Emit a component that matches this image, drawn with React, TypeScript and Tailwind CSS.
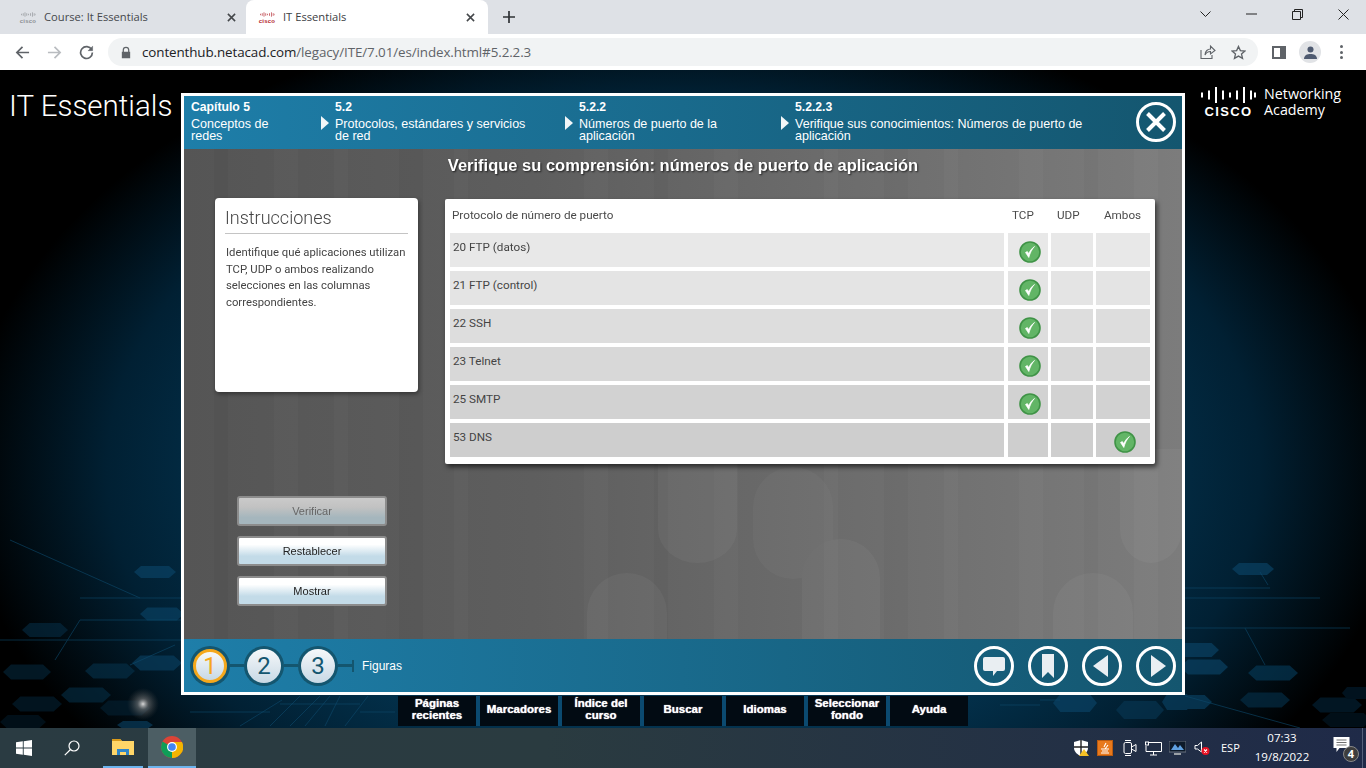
import React from "react";

const hexes: [number, number, number, number, string][] = [
  [155, 572, 42, 12, "#0b4467"], [162, 614, 44, 13, "#0a4264"], [45, 630, 46, 14, "#062a40"], [27, 672, 48, 15, "#052538"],
  [110, 671, 50, 15, "#063048"], [157, 663, 50, 15, "#0a3f60"], [86, 695, 50, 15, "#052c42"], [37, 704, 50, 15, "#041f30"],
  [125, 708, 50, 15, "#041f30"], [23, 722, 46, 14, "#031825"], [135, 725, 36, 8, "#0a3f60"],
  [1253, 569, 42, 12, "#0b4467"], [1197, 650, 44, 14, "#0b4467"], [1204, 667, 48, 15, "#0b4467"], [1273, 673, 50, 15, "#063a58"],
  [1265, 700, 50, 15, "#052f48"], [1337, 705, 50, 15, "#042236"], [1190, 702, 44, 14, "#0a4264"], [1357, 693, 30, 12, "#031d2e"],
  [1347, 720, 50, 14, "#031825"], [1075, 703, 44, 18, "#0b4467"], [1140, 710, 48, 18, "#083652"], [1177, 702, 30, 16, "#0a4264"],
];

function PageBackdrop() {
  return (
    <svg className="absolute inset-0 w-[1366px] h-[658px]" viewBox="0 70 1366 658" fill="none">
      <defs>
        <radialGradient id="glow">
          <stop offset="0%" stopColor="#d8d8d8" />
          <stop offset="35%" stopColor="#777" stopOpacity="0.6" />
          <stop offset="100%" stopColor="#444" stopOpacity="0" />
        </radialGradient>
      </defs>
      <g opacity="0.65">
        {hexes.map(([x, y, w, h, c], i) => (
          <polygon key={i} fill={c} points={`${x - w / 2},${y} ${x - w / 3},${y - h / 2} ${x + w / 3},${y - h / 2} ${x + w / 2},${y} ${x + w / 3},${y + h / 2} ${x - w / 3},${y + h / 2}`} />
        ))}
      </g>
      <g stroke="#0d4a6c" strokeWidth="1" opacity="0.6">
        <path d="M10 540 L140 598 H181 M80 598 H140 M0 640 H181 M55 660 L80 620 H181 M130 665 L175 645" />
        <path d="M1185 588 H1270 M1185 598 H1320 M1185 628 H1350 M1245 628 L1265 665 M1260 572 L1268 585" />
        <path d="M190 712 H270 M280 704 H360 M240 726 L282 700 M270 726 L300 696 M290 726 L320 696 M305 726 L330 696 M325 726 L340 696 M345 726 L368 696 M360 712 H395" />
        <path d="M1185 696 L1300 728 M1040 700 H1060 M1000 705 H1040" />
      </g>
      <circle cx="143" cy="704" r="16" fill="url(#glow)" />
    </svg>
  );
}

function ContentBackdrop() {
  const stripes = [30, 90, 150, 215, 270, 400, 470, 530, 640, 700, 760, 835, 900, 950];
  return (
    <svg className="absolute inset-0 w-[998px] h-[490px]" viewBox="0 0 998 490" fill="none">
      {stripes.map((x, i) => (
        <rect key={x} x={x} y="0" width={i % 2 ? 24 : 14} height="490" fill={i % 3 ? "#fff" : "#000"} opacity="0.025" />
      ))}
      <g fill="#fff" opacity="0.04">
        <path d="M474 300 V380 a39.500 34 0 0 0 79 0 V300 Z" />
        <path d="M569 490 V358 a40 40 0 0 1 80 0 V390 a40 40 0 0 1 -80 0 Z" opacity="0.7" />
        <path d="M618 490 V429 a39 39 0 0 1 78 0 V490 Z" />
        <path d="M403 490 V464 a40 40 0 0 1 80 0 V490 Z" />
        <path d="M869 490 V464 a40 40 0 0 1 80 0 V490 Z" />
        <path d="M936 300 V380 a31 34 0 0 0 62 0 V300 Z" />
        <path d="M150 490 V390 a26 40 0 0 1 52 0 V490 Z" opacity="0.35" />
      </g>
    </svg>
  );
}

function CiscoBars({ color, className }: { color: string; className: string }) {
  const bars: [number, number][] = [[0, 4], [5, 7], [10, 12], [15, 7], [20, 4], [25, 7], [30, 12], [35, 7], [40, 4]];
  return (
    <svg viewBox="0 0 41 12" className={className}>
      {bars.map(([x, h]) => (
        <rect key={x} x={x} y={(12 - h) / 2} width="1.800" height={h} fill={color} />
      ))}
    </svg>
  );
}

function Favicon({ color }: { color: string }) {
  return (
    <span className="flex flex-col items-center w-[16px] shrink-0">
      <CiscoBars color={color} className="w-[15px] h-[7px]" />
      <span className="text-[6px] leading-[6px] font-bold font-['Liberation_Sans',sans-serif] tracking-[0.2px]" style={{ color }}>cisco</span>
    </span>
  );
}

function TabX() {
  return (
    <svg viewBox="0 0 10 10" className="w-[9px] h-[9px] shrink-0" stroke="#44474a" strokeWidth="1.700" fill="none">
      <path d="M1 1 L9 9 M9 1 L1 9" />
    </svg>
  );
}

function Chrome() {
  return (
    <>
      <div className="h-[34px] bg-[#dee1e6] flex items-end shrink-0 font-['Open_Sans',sans-serif] text-[11.200px] text-[#3c4043]">
        <div className="w-[246px] h-[34px] flex items-center pl-[20px] pr-[10px] text-[#45484c]">
          <Favicon color="#8d9094" />
          <span className="ml-[8px] flex-1">Course: It Essentials</span>
          <TabX />
        </div>
        <div className="w-[242px] h-[34px] bg-white rounded-t-[8px] flex items-center pl-[13px] pr-[13px]">
          <Favicon color="#b3262e" />
          <span className="ml-[8px] flex-1">IT Essentials</span>
          <TabX />
        </div>
        <div className="h-[34px] w-[42px] flex items-center justify-center">
          <svg viewBox="0 0 12 12" className="w-[12px] h-[12px]" stroke="#2f3235" strokeWidth="1.700"><path d="M6 0 V12 M0 6 H12" /></svg>
        </div>
        <div className="ml-auto h-[34px] flex items-center pb-[6px]">
          <div className="w-[46px] flex justify-center">
            <svg viewBox="0 0 11 7" className="w-[11px] h-[7px]" stroke="#222" strokeWidth="1" fill="none"><path d="M0.500 0.500 L5.500 5.500 L10.500 0.500" /></svg>
          </div>
          <div className="w-[46px] flex justify-center">
            <svg viewBox="0 0 11 2" className="w-[11px] h-[2px]" stroke="#222" strokeWidth="1"><path d="M0 1 H11" /></svg>
          </div>
          <div className="w-[46px] flex justify-center">
            <svg viewBox="0 0 11 11" className="w-[11px] h-[11px]" stroke="#222" strokeWidth="1" fill="none"><path d="M0.500 2.500 H8.500 V10.500 H0.500 Z M2.500 2.500 V0.500 H10.500 V8.500 H8.500" /></svg>
          </div>
          <div className="w-[46px] flex justify-center">
            <svg viewBox="0 0 11 11" className="w-[11px] h-[11px]" stroke="#222" strokeWidth="1"><path d="M0.500 0.500 L10.500 10.500 M10.500 0.500 L0.500 10.500" /></svg>
          </div>
        </div>
      </div>
      <div className="h-[36px] bg-white flex items-center shrink-0">
        <div className="w-[108px] flex items-center pl-[15px] gap-[17px]">
          <svg viewBox="0 0 16 16" className="w-[15px] h-[15px]" fill="none" stroke="#5f6368" strokeWidth="1.800"><path d="M15 8 H2 M8 2 L2 8 L8 14" /></svg>
          <svg viewBox="0 0 16 16" className="w-[15px] h-[15px]" fill="none" stroke="#b9bcc0" strokeWidth="1.800"><path d="M1 8 H14 M8 2 L14 8 L8 14" /></svg>
          <svg viewBox="0 0 16 16" className="w-[15px] h-[15px]" fill="none" stroke="#5f6368" strokeWidth="1.800"><path d="M13.500 5 A6.300 6.300 0 1 0 14.300 8" /><path d="M14.500 1 V6 H9.500" fill="#5f6368" strokeWidth="0.500" /></svg>
        </div>
        <div className="w-[1150px] h-[28px] bg-[#f1f3f4] rounded-full flex items-center pl-[13px] pr-[10px]">
          <svg viewBox="0 0 12 14" className="w-[10px] h-[13px] shrink-0" fill="#5f6368"><path d="M2 6 V4 a4 4 0 0 1 8 0 V6 H11 V14 H1 V6 Z M3.500 6 H8.500 V4 a2.500 2.500 0 0 0 -5 0 Z" /></svg>
          <span className="ml-[11px] flex-1 text-[13.400px] text-[#5f6368] font-['Open_Sans',sans-serif] tracking-[-0.1px]">
            <span className="text-[#202124]">contenthub.netacad.com</span>/legacy/ITE/7.01/es/index.html#5.2.2.3
          </span>
          <svg viewBox="0 0 16 16" className="w-[16px] h-[16px] mr-[15px]" fill="none" stroke="#5f6368" strokeWidth="1.100"><path d="M1 6 V14.500 H12 V11" /><path d="M5 11 C5 7 8 5 10.500 5 V2 L15 6.500 L10.500 10 V7.500 C8 7.500 6 9 5 11 Z" /></svg>
          <svg viewBox="0 0 16 16" className="w-[15px] h-[15px] mr-[2px]" fill="none" stroke="#5f6368" strokeWidth="1.400"><path d="M8 1.500 L10 6 L14.800 6.400 L11.200 9.600 L12.300 14.300 L8 11.800 L3.700 14.300 L4.800 9.600 L1.200 6.400 L6 6 Z" /></svg>
        </div>
        <div className="ml-[14px] w-[14px] h-[13px] border-[2px] border-[#5f6368] border-r-[6px] shrink-0" />
        <div className="ml-[13px] w-[22px] h-[22px] rounded-full bg-[#e1e3e6] flex items-center justify-center shrink-0">
          <svg viewBox="0 0 12 12" className="w-[13px] h-[13px]" fill="#4e5a70"><circle cx="6" cy="3.300" r="2.800" /><path d="M0 12 C0 8.500 3 7.300 6 7.300 C9 7.300 12 8.500 12 12 Z" /></svg>
        </div>
        <div className="ml-[19px] flex flex-col gap-[2.500px]">
          <span className="w-[3px] h-[3px] rounded-full bg-[#5f6368]" />
          <span className="w-[3px] h-[3px] rounded-full bg-[#5f6368]" />
          <span className="w-[3px] h-[3px] rounded-full bg-[#5f6368]" />
        </div>
      </div>
    </>
  );
}

function Check() {
  return (
    <svg viewBox="0 0 22 22" className="w-[22px] h-[22px]">
      <circle cx="11" cy="11" r="10" fill="#62b566" stroke="#3f9346" strokeWidth="1.600" />
      <path d="M6.500 11.500 L9.800 16.500 C11 12 13 8 15.500 5.500 C12.800 7.500 10.800 10 9.600 12.600 L8.300 10.500 Z" fill="#fff" stroke="#fff" strokeWidth="0.700" />
    </svg>
  );
}

const rows = [
  { name: "20 FTP (datos)", bg: "bg-[#e8e8e8]", col: 0 },
  { name: "21 FTP (control)", bg: "bg-[#e4e4e4]", col: 0 },
  { name: "22 SSH", bg: "bg-[#dddddd]", col: 0 },
  { name: "23 Telnet", bg: "bg-[#d8d8d8]", col: 0 },
  { name: "25 SMTP", bg: "bg-[#d2d2d2]", col: 0 },
  { name: "53 DNS", bg: "bg-[#cecece]", col: 2 },
];

function Table() {
  return (
    <div className="ml-[27px] mt-[19px] w-[710px] h-[265px] bg-white rounded-[2px] shadow-[2px_3px_5px_rgba(0,0,0,0.6)] px-[5px] text-[11.700px] text-[#444] font-['Roboto',sans-serif]">
      <div className="h-[34px] flex items-center text-[#4a4a4a]">
        <span className="ml-[2px] w-[560px]">Protocolo de número de puerto</span>
        <span className="w-[45px]">TCP</span>
        <span className="w-[47px]">UDP</span>
        <span>Ambos</span>
      </div>
      <div className="flex flex-col gap-[4px]">
        {rows.map((r) => (
          <div key={r.name} className="flex h-[34px]">
            <div className={`w-[554px] pl-[3px] pt-[7px] leading-[14px] ${r.bg}`}>{r.name}</div>
            <div className={`ml-[4px] w-[40px] pl-[11px] pt-[8px] ${r.bg}`}>{r.col === 0 && <Check />}</div>
            <div className={`ml-[3px] w-[42px] ${r.bg}`} />
            <div className={`ml-[3px] w-[54px] pl-[18px] pt-[8px] ${r.bg}`}>{r.col === 2 && <Check />}</div>
          </div>
        ))}
      </div>
    </div>
  );
}

function Instructions() {
  return (
    <div className="w-[203px] h-[194px] bg-white rounded-[4px] px-[10px] pt-[8px] shadow-[1px_2px_4px_rgba(0,0,0,0.4)]">
      <div className="h-[28px] border-b border-[#c4c4c4] text-[18px] leading-[24px] font-light text-[#444] font-['Roboto',sans-serif]">Instrucciones</div>
      <p className="mt-[11px] ml-px text-[11.300px] leading-[16.700px] text-[#444] font-['Roboto',sans-serif]">
        Identifique qué aplicaciones utilizan TCP, UDP o ambos realizando selecciones en las columnas correspondientes.
      </p>
    </div>
  );
}

function ActionButton({ label, disabled }: { label: string; disabled?: boolean }) {
  return (
    <div
      className={`w-[150px] h-[30px] rounded-[3px] border-2 border-[#8c8c8c] flex items-center justify-center text-[11px] font-['Liberation_Sans',sans-serif] ${
        disabled
          ? "bg-[linear-gradient(#cacaca_0%,#c2c2c2_35%,#a5b6bd_75%,#a5b6bd_100%)] text-[#666]"
          : "bg-[linear-gradient(#ffffff_0%,#ffffff_25%,#c3dbe8_70%,#c3dbe8_100%)] text-[#222]"
      }`}
    >
      {label}
    </div>
  );
}

function Header() {
  const Arrow = () => (
    <svg viewBox="0 0 8 14" className="w-[8px] h-[14px] mt-[20px] shrink-0 mr-[6px]" fill="#f2f6f8"><path d="M0 0 L8 7 L0 14 Z" /></svg>
  );
  const Item = ({ n, t, w }: { n: string; t: React.ReactNode; w: string }) => (
    <div className={`${w} pt-[4px]`}>
      <div className="font-bold leading-[14px] text-[12.200px]">{n}</div>
      <div className="mt-[4px] leading-[12px]">{t}</div>
    </div>
  );
  return (
    <div className="h-[53px] bg-[linear-gradient(90deg,#1e7ea9,#14566f)] text-white text-[12.550px] flex font-['Liberation_Sans',sans-serif] pl-[7px] relative shrink-0">
      <div className="w-[130px] flex"><Item n="Capítulo 5" t={<>Conceptos de<br />redes</>} w="w-[130px]" /></div>
      <div className="w-[244px] flex"><Arrow /><Item n="5.2" t={<>Protocolos, estándares y servicios<br />de red</>} w="w-[230px]" /></div>
      <div className="w-[216px] flex"><Arrow /><Item n="5.2.2" t={<>Números de puerto de la<br />aplicación</>} w="w-[200px]" /></div>
      <div className="w-[330px] flex"><Arrow /><Item n="5.2.2.3" t={<>Verifique sus conocimientos: Números de puerto de<br />aplicación</>} w="w-[310px]" /></div>
      <div className="ml-auto mr-[6px] mt-[6px]">
        <svg viewBox="0 0 40 40" className="w-[40px] h-[40px]" fill="none" stroke="#fff">
          <circle cx="20" cy="20" r="18.500" strokeWidth="3" />
          <path d="M11.500 11.500 L28.500 28.500 M28.500 11.500 L11.500 28.500" strokeWidth="4" />
        </svg>
      </div>
    </div>
  );
}

function Step({ n, active }: { n: string; active?: boolean }) {
  return (
    <div className="w-[40px] h-[40px] rounded-full bg-[#14566f] p-[3px] shrink-0">
      <div
        className={`w-[34px] h-[34px] rounded-full flex items-center justify-center text-[24px] font-['Roboto',sans-serif] bg-[linear-gradient(#f6f8fa,#c8d9e5)] ${
          active ? "border-[3px] border-[#f5a81c] text-[#f5a81c]" : "text-[#14566f]"
        }`}
      >
        {n}
      </div>
    </div>
  );
}

function RoundIcon({ children }: { children: React.ReactNode }) {
  return (
    <svg viewBox="0 0 40 40" className="w-[40px] h-[40px]" fill="#e9eef2">
      <circle cx="20" cy="20" r="18.500" fill="none" stroke="#fff" strokeWidth="3" />
      {children}
    </svg>
  );
}

function Footer() {
  const Line = () => <div className="w-[14px] h-[3px] bg-[#14566f] shrink-0" />;
  return (
    <div className="h-[53px] bg-[linear-gradient(90deg,#1e7ea9,#14566f)] flex items-center pl-[6px] pr-[6px] gap-0 shrink-0">
      <Step n="1" active />
      <Line />
      <Step n="2" />
      <Line />
      <Step n="3" />
      <Line />
      <div className="w-[2px] h-[12px] bg-[#14566f]" />
      <span className="ml-[8px] text-[12px] text-white font-['Liberation_Sans',sans-serif]">Figuras</span>
      <div className="ml-auto flex gap-[14px]">
        <RoundIcon><path d="M11 11 H29 a2 2 0 0 1 2 2 V23 a2 2 0 0 1 -2 2 H23 L19 30 V25 H11 a2 2 0 0 1 -2 -2 V13 a2 2 0 0 1 2 -2 Z" /></RoundIcon>
        <RoundIcon><path d="M14 8 H26 V32 L20 26 L14 32 Z" /></RoundIcon>
        <RoundIcon><path d="M26 9 V31 L11 20 Z" /></RoundIcon>
        <RoundIcon><path d="M15 9 V31 L30 20 Z" /></RoundIcon>
      </div>
    </div>
  );
}

function Panel() {
  return (
    <div className="w-[1004px] h-[602px] border-[3px] border-white flex flex-col">
      <Header />
      <div className="h-[490px] relative bg-[linear-gradient(90deg,#555555,#5e5e5e_35%,#7c7c7c)] shrink-0">
        <ContentBackdrop />
        <div className="relative flex flex-col h-full">
          <h1 className="h-[31px] pt-[5px] text-center text-[16.500px] leading-[22px] font-bold text-white font-['Liberation_Sans',sans-serif] [text-shadow:1px_1px_2px_rgba(0,0,0,0.7)]">
            Verifique su comprensión: números de puerto de aplicación
          </h1>
          <div className="flex">
            <div className="ml-[31px] mt-[18px] flex flex-col">
              <Instructions />
              <div className="ml-[22px] mt-[104px] flex flex-col gap-[10px]">
                <ActionButton label="Verificar" disabled />
                <ActionButton label="Restablecer" />
                <ActionButton label="Mostrar" />
              </div>
            </div>
            <Table />
          </div>
        </div>
      </div>
      <Footer />
    </div>
  );
}

function BottomNav() {
  const items: React.ReactNode[] = [
    <>Páginas<br />recientes</>, "Marcadores", <>Índice del<br />curso</>, "Buscar", "Idiomas", <>Seleccionar<br />fondo</>, "Ayuda",
  ];
  return (
    <div className="ml-[217px] mt-px w-[570px] h-[30px] flex gap-[4px] bg-[#0b4a70]">
      {items.map((t, i) => (
        <div key={i} className="w-[78px] h-[30px] bg-[#020b13] text-white text-[11.500px] leading-[12.500px] font-bold text-center flex items-center justify-center pb-[4px] font-['Liberation_Sans',sans-serif] [text-shadow:0_0_1px_#fff]">
          <span>{t}</span>
        </div>
      ))}
    </div>
  );
}

function Logo() {
  const bars: [number, number][] = [[0, 5], [7, 9], [14, 16], [21, 9], [28, 5], [35, 9], [42, 16], [49, 9], [53, 5]];
  return (
    <div className="ml-[16px] mt-[17px] flex text-white">
      <div className="w-[55px] flex flex-col items-center">
        <svg viewBox="0 0 55 16" className="w-[55px] h-[16px]">
          {bars.map(([x, h]) => (
            <rect key={x} x={x} y={(16 - h) / 2} width="2" height={h} fill="#fff" />
          ))}
        </svg>
        <span className="mt-[1px] text-[13px] leading-[16px] font-bold tracking-[1.400px] font-['Liberation_Sans',sans-serif]">CISCO</span>
      </div>
      <div className="ml-[8px] text-[14.300px] leading-[16px] font-['Open_Sans',sans-serif] -mt-[1px]">
        Networking<br />Academy
      </div>
    </div>
  );
}

function Taskbar() {
  return (
    <div className="h-[40px] bg-[linear-gradient(90deg,#2a3b42,#2a3b40_40%,#1f2a48)] flex items-center shrink-0 text-white font-['Open_Sans',sans-serif]">
      <div className="w-[48px] flex justify-center">
        <svg viewBox="0 0 16 16" className="w-[16px] h-[16px]" fill="#fff"><path d="M0 2.300 L6.800 1.300 V7.500 H0 Z M7.700 1.200 L16 0 V7.500 H7.700 Z M0 8.400 H6.800 V14.700 L0 13.700 Z M7.700 8.400 H16 V16 L7.700 14.800 Z" /></svg>
      </div>
      <div className="w-[48px] flex justify-center">
        <svg viewBox="0 0 16 16" className="w-[16px] h-[16px]" fill="none" stroke="#fff" strokeWidth="1.200"><circle cx="10" cy="6" r="5" /><path d="M6.500 9.500 L0.800 15.200" /></svg>
      </div>
      <div className="ml-[7px] w-[40px] h-[40px] flex items-center justify-center border-b-[2px] border-[#6cb4ee]">
        <svg viewBox="0 0 22 18" className="w-[22px] h-[18px]">
          <path d="M0 1 H8 L10 3 H22 V17 H0 Z" fill="#ffd668" />
          <path d="M0 1 H8 L10 3 H0 Z" fill="#d99a1a" />
          <path d="M5 17 V11 H17 V17 H14 V14 H8 V17 Z" fill="#2f86c8" />
        </svg>
      </div>
      <div className="ml-[5px] w-[48px] h-[40px] bg-[#4c5e64] flex items-center justify-center border-b-[2px] border-[#6cb4ee]">
        <svg viewBox="0 0 22 22" className="w-[22px] h-[22px]">
          <circle cx="11" cy="11" r="11" fill="#db4437" />
          <path d="M11 11 L1.500 5.500 A11 11 0 0 0 11 22 Z" fill="#0f9d58" />
          <path d="M11 11 L11 22 A11 11 0 0 0 21 6 L11 6 Z" fill="#f4b400" />
          <circle cx="11" cy="11" r="5" fill="#fff" />
          <circle cx="11" cy="11" r="3.800" fill="#4285f4" />
        </svg>
      </div>
      <div className="ml-auto flex items-center h-[40px]">
        <svg viewBox="0 0 16 16" className="w-[16px] h-[16px]">
          <path d="M8 0 L15 2 V8 C15 12 11 15 8 16 C5 15 1 12 1 8 V2 Z" fill="#fff" />
          <path d="M8 0 V16 M1 7 H15" stroke="#222" strokeWidth="1.400" />
          <path d="M11 9 L16 16 H6 Z" fill="#f6c225" />
        </svg>
        <div className="ml-[8px] w-[16px] h-[16px] bg-[#e8791c] flex items-center justify-center border border-[#b85a10]">
          <svg viewBox="0 0 12 12" className="w-[12px] h-[12px]" fill="none" stroke="#fff" strokeWidth="1.100"><path d="M7 1 L5 5 M9 3 L6 7 M2 7 H10 M3 9 H9 M2 11 H10" /></svg>
        </div>
        <svg viewBox="0 0 16 16" className="ml-[9px] w-[16px] h-[16px]" fill="none" stroke="#fff" strokeWidth="1"><path d="M2 4 V12 a1.500 1.500 0 0 0 1.500 1.500 H8 a1.500 1.500 0 0 0 1.500 -1.500 V4 a1.500 1.500 0 0 0 -1.500 -1.500 H3.500 A1.500 1.500 0 0 0 2 4 Z M9.500 7 L14 4.500 V11.500 L9.500 9" /><path d="M3 0.500 H9 M3 15.500 H9" /></svg>
        <svg viewBox="0 0 17 15" className="ml-[7px] w-[17px] h-[15px]" fill="none" stroke="#fff" strokeWidth="1"><path d="M4 1.500 H16.500 V10.500 H1 V5 M8.500 10.500 V14 M5 14 H12" /><rect x="0.500" y="1" width="3" height="3" /></svg>
        <svg viewBox="0 0 17 14" className="ml-[7px] w-[17px] h-[14px]"><rect width="17" height="11" fill="#0d1a2a" stroke="#6b7280" /><path d="M2 9 L6 3 L9 7 L11 4 L15 9 Z" fill="#5fa0e0" /><rect x="5" y="12" width="7" height="2" fill="#9aa0a6" /></svg>
        <svg viewBox="0 0 16 16" className="ml-[8px] w-[16px] h-[16px]" fill="none"><path d="M1 5.500 H3.500 L7.500 2 V12 L3.500 9 H1 Z" stroke="#fff" strokeWidth="1" /><circle cx="11.500" cy="11" r="4" fill="#e81123" /><path d="M10 9.500 L13 12.500 M13 9.500 L10 12.500" stroke="#fff" strokeWidth="1.100" /></svg>
        <span className="ml-[11px] w-[20px] text-[11px]">ESP</span>
        <div className="ml-[10px] w-[62px] text-center text-[11.500px] leading-[19px] pb-[2px]">07:33<br />19/8/2022</div>
        <div className="ml-[19px] w-[28px] relative h-[24px]">
          <svg viewBox="0 0 16 15" className="w-[17px] h-[15px] ml-[1px] mt-[1px]" fill="#fff"><path d="M0 0 H16 V11 H6 L3 15 V11 H0 Z" /><path d="M3 3 H13 M3 5.500 H13 M3 8 H13" stroke="#333" strokeWidth="0.700" /></svg>
          <span className="absolute right-[1px] bottom-[-2px] w-[16px] h-[16px] rounded-full bg-[#3d3d3d] border border-[#888] text-[11px] leading-[14px] text-center font-bold">4</span>
        </div>
        <div className="ml-[2px] w-px h-[40px] bg-[#55607a]" />
        <div className="w-[3px]" />
      </div>
    </div>
  );
}

export default function App() {
  return (
    <div className="w-[1366px] h-[768px] overflow-hidden flex flex-col bg-black">
      <Chrome />
      <div className="relative h-[658px] shrink-0 flex bg-[radial-gradient(ellipse_720px_470px_at_683px_400px,#0a4566_0%,#03314c_60%,#012033_80%,#000000_100%)]">
        <PageBackdrop />
        <div className="relative w-[181px] shrink-0 pl-[9px] pt-[18px] text-[29.500px] leading-[36px] font-light text-white font-['Roboto',sans-serif] whitespace-nowrap">IT Essentials</div>
        <div className="relative pt-[23px] flex flex-col">
          <Panel />
          <BottomNav />
        </div>
        <div className="relative"><Logo /></div>
      </div>
      <Taskbar />
    </div>
  );
}
